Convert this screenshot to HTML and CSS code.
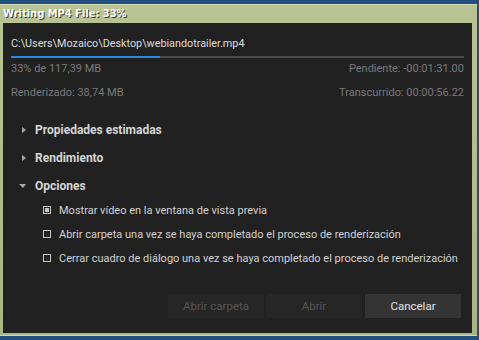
FILE: index.html
```html
<!DOCTYPE html>
<html lang="es">
<head>
  <meta charset="UTF-8" />
  <title>Writing MP4 File: 33%</title>
  <link rel="stylesheet" href="styles.css">
</head>
<body>
  <div class="window">
    <div class="titlebar">Writing MP4 File: 33%</div>
    <div class="content">
      <div class="path">C:\Users\Mozaico\Desktop\webiandotrailer.mp4</div>
      <div class="progress"><div class="progress-fill"></div></div>

      <div class="stats first">
        <span>33% de 117,39 MB</span>
        <span>Pendiente: -00:01:31.00</span>
      </div>
      <div class="stats">
        <span>Renderizado: 38,74 MB</span>
        <span>Transcurrido: 00:00:56.22</span>
      </div>

      <div class="sections">
        <div class="section"><span class="arrow"></span>Propiedades estimadas</div>
        <div class="section"><span class="arrow"></span>Rendimiento</div>
        <div class="section open"><span class="arrow"></span>Opciones</div>
      </div>

      <div class="options">
        <label class="option"><span class="check checked"></span>Mostrar vídeo en la ventana de vista previa</label>
        <label class="option"><span class="check"></span>Abrir carpeta una vez se haya completado el proceso de renderización</label>
        <label class="option"><span class="check"></span>Cerrar cuadro de diálogo una vez se haya completado el proceso de renderización</label>
      </div>

      <div class="buttons">
        <button class="btn" disabled>Abrir carpeta</button>
        <button class="btn" disabled>Abrir</button>
        <button class="btn primary">Cancelar</button>
      </div>
    </div>
  </div>
</body>
</html>
```

FILE: styles.css
```css
html, body {
  margin: 0;
  height: 100%;
}

body {
  background-color: #21507f;
  font-family: Roboto, sans-serif;
  font-size: 11px;
}

/* outer window frame */
.window {
  margin-top: 4px;
  width: 477px;
  height: 332px;
  box-sizing: border-box;
  background: linear-gradient(to bottom, #b9c495, #a9b684);
  border-top: 1px solid #d6dcb6;
  border-bottom: 1px solid #cfd7ad;
  padding: 0 5px 2px 3px;
  display: flex;
  flex-direction: column;
}

.titlebar {
  height: 18px;
  line-height: 17px;
  font-family: 'DejaVu Sans Condensed', 'DejaVu Sans', sans-serif;
  font-weight: bold;
  font-size: 11px;
  color: #ffffff;
  text-shadow: 1px 1px 0 #3a3f2c;
}

.content {
  flex: 1;
  background-color: #212121;
  padding: 13px 8px 15px 8px;
  display: flex;
  flex-direction: column;
}

.path {
  line-height: 16px;
  font-size: 10.8px;
  color: #dedede;
}

.progress {
  height: 2px;
  margin-top: 4px;
  background-color: #4a4a4a;
}

.progress-fill {
  width: 33%;
  height: 100%;
  background-color: #2c88e6;
}

.stats {
  display: flex;
  justify-content: space-between;
  line-height: 16px;
  color: #7a7a7a;
  margin-top: 8px;
}

.stats.first {
  margin-top: 3px;
}

.sections {
  margin-top: 17px;
  display: flex;
  flex-direction: column;
  gap: 4px;
}

.section {
  height: 24px;
  display: flex;
  align-items: center;
  font-weight: bold;
  font-size: 12px;
  color: #d6d6d6;
  padding-left: 8px;
}

.arrow {
  width: 0;
  height: 0;
  border-top: 3px solid transparent;
  border-bottom: 3px solid transparent;
  border-left: 4px solid #a8a8a8;
  margin-left: 3px;
  margin-right: 9px;
}

.section.open .arrow {
  border-left: 4px solid transparent;
  border-right: 3px solid transparent;
  border-top: 4px solid #a8a8a8;
  border-bottom: none;
  margin-left: 0;
  margin-right: 9px;
}

.options {
  display: flex;
  flex-direction: column;
}

.option {
  height: 24px;
  display: flex;
  align-items: center;
  color: #d2d2d2;
  padding-left: 32px;
  white-space: nowrap;
}

.check {
  flex: none;
  width: 6px;
  height: 6px;
  border: 1px solid #c6c6c6;
  margin-right: 8px;
  display: flex;
  align-items: center;
  justify-content: center;
}

.check.checked::after {
  content: "";
  width: 4px;
  height: 4px;
  background-color: #c6c6c6;
}

.buttons {
  margin-top: auto;
  display: flex;
  justify-content: flex-end;
  gap: 2px;
  padding-right: 3px;
}

.btn {
  width: 96px;
  height: 24px;
  border: none;
  font-family: Roboto, sans-serif;
  font-size: 11.5px;
  background-color: #262626;
  color: #555555;
}

.btn.primary {
  background-color: #343434;
  color: #e2e2e2;
  margin-left: 1px;
}
```
